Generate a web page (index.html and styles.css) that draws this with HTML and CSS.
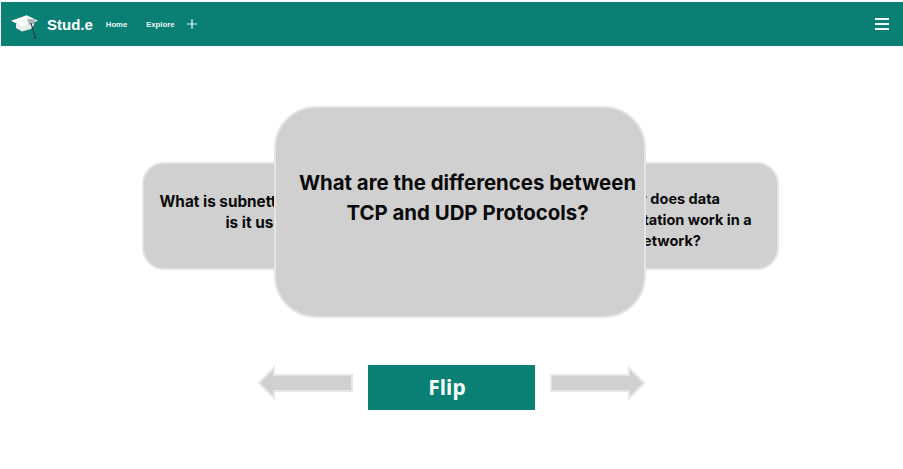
FILE: index.html
```html
<!DOCTYPE html>
<html>
<head>
  <title>Stud.e Flashcards</title>
  <link rel="stylesheet" href="styles.css">
</head>
<body>
  <nav class="navbar">
    <svg class="logo" width="28" height="26" viewBox="0 0 28 26">
      <path d="M5 10 V14 L11 17.5 L20 15 L23 11 V7 Z" fill="#eceeee"/>
      <path d="M0 6.7 L15.7 1.2 L27 6.7 L10.7 12.3 Z" fill="#ffffff"/>
      <path d="M16 4.5 L24 5.5 L23.5 9.5 L18 11 Z" fill="#aab5b3"/>
      <path d="M20 9 L24 23" stroke="#1f3532" stroke-width="1" fill="none"/>
      <circle cx="24" cy="23.5" r="1" fill="#1d2b29"/>
    </svg>
    <span class="brand">Stud.e</span>
    <a class="nav-link nav-home">Home</a>
    <a class="nav-link nav-explore">Explore</a>
    <svg class="plus" width="10" height="10" viewBox="0 0 10 10">
      <path d="M5 0 V10 M0 5 H10" stroke="#eef6f5" stroke-width="1.2"/>
    </svg>
    <div class="menu-icon">
      <span></span>
      <span></span>
      <span></span>
    </div>
  </nav>

  <main>
    <section class="cards">
      <div class="card card-side card-left">What is subnetting and why<br>is it used?</div>
      <div class="card card-main">What are the differences between TCP and UDP Protocols?</div>
      <div class="card card-side card-right">How does data<br>fragmentation work in a<br>network?</div>
    </section>

    <section class="controls">
      <svg width="96" height="36" viewBox="0 0 96 36">
        <path class="arrow" d="M2 18 L17 3 V10 H95 V26 H17 V33 Z"/>
      </svg>
      <button class="flip-btn">Flip</button>
      <svg width="96" height="36" viewBox="0 0 96 36">
        <path class="arrow" d="M94 18 L79 3 V10 H1 V26 H79 V33 Z"/>
      </svg>
    </section>
  </main>
</body>
</html>
```

FILE: styles.css
```css
body {
  font-family: "Liberation Sans", Arial, sans-serif;
  margin: 0;
  padding: 2px 0 0 1px;
  background-color: #fff;
}

.navbar {
  display: flex;
  align-items: center;
  height: 44px;
  background-color: #0a7f74;
  color: #fff;
}

.logo {
  margin: 6px 0 0 10px;
}

.brand {
  margin-left: 8px;
  font-size: 15px;
  font-weight: bold;
}

.nav-link {
  font-size: 7.7px;
  font-weight: bold;
  color: #eef6f5;
}

.nav-home {
  margin-left: 13px;
}

.nav-explore {
  margin-left: 19px;
}

.plus {
  margin-left: 13px;
}

.menu-icon {
  display: flex;
  flex-direction: column;
  gap: 3px;
  margin-left: auto;
  margin-right: 14px;
}

.menu-icon span {
  display: block;
  width: 14px;
  height: 2px;
  background-color: #f2f7f6;
}

.cards {
  display: flex;
  align-items: center;
  height: 212px;
  margin-top: 60px;
  padding-left: 141px;
}

.card {
  box-sizing: border-box;
  background-color: #d0d0d0;
  border: 2px solid #e4e4e4;
  font-family: Inter, "Liberation Sans", sans-serif;
  color: #0a0a0a;
  text-align: center;
}

.card-main {
  position: relative;
  z-index: 1;
  width: 372px;
  height: 212px;
  padding: 60px 5px 0 20px;
  border-radius: 42px;
  font-size: 20.4px;
  font-weight: 700;
  line-height: 30px;
}

.card-side {
  height: 108px;
  margin-top: 8px;
  border-radius: 22px;
  font-size: 15.3px;
  font-weight: 700;
  line-height: 21px;
}

.card-left {
  width: 244px;
  margin-right: -112px;
  padding: 27px 2px 0 0;
}

.card-right {
  width: 222px;
  margin-left: -89px;
  padding: 24px 1px 0 0;
  font-size: 14.5px;
}

.controls {
  display: flex;
  align-items: flex-start;
  justify-content: center;
  gap: 15px;
  margin-top: 47px;
  padding-right: 2px;
}

.arrow {
  fill: #d0d0d0;
  stroke: #e6e6e6;
  stroke-width: 2;
}

.flip-btn {
  width: 167px;
  height: 45px;
  padding: 0 8px 2px 0;
  border: none;
  background-color: #0a7f74;
  color: #f4faf9;
  font-family: "Noto Sans", sans-serif;
  font-size: 21px;
  font-weight: bold;
}
```
